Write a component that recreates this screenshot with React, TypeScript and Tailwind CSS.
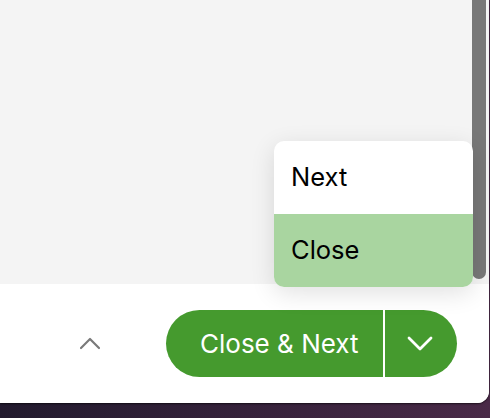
function Chevron({ up, className }: { up?: boolean; className?: string }) {
  return (
    <svg width="26" height="15" viewBox="0 0 26 15" fill="none" className={className}>
      <path
        d={up ? 'M4 12 L13 3 L22 12' : 'M2 2 L13 13 L24 2'}
        stroke="currentColor"
        strokeWidth={up ? 2.2 : 2.8}
        strokeLinecap="round"
        strokeLinejoin="round"
      />
    </svg>
  )
}

export default function App() {
  return (
    <div
      className="relative w-[490px] h-[418px] overflow-hidden bg-gradient-to-r from-[#221a2e] to-[#4a2a48]"
      style={{ fontFamily: 'Inter, "Noto Sans", sans-serif' }}
    >
      {/* Fenêtre */}
      <div className="w-[489px] h-[403px] flex flex-col rounded-br-xl overflow-hidden bg-white shadow-[0_1px_2px_rgba(0,0,0,0.6)]">
        {/* Zone de contenu */}
        <div className="h-[284px] bg-[#f4f4f4] flex justify-end pr-[3px]">
          <div className="w-[14px] h-[279px] bg-[#787878] rounded-b-full" />
        </div>

        {/* Pied */}
        <div className="flex-1 bg-white flex items-start pt-[26px]">
          <div className="w-[166px] h-[67px] flex items-center justify-center pl-[14px]">
            <Chevron up className="text-[#7a7a7a]" />
          </div>
          <div className="flex h-[67px] w-[291px] rounded-full bg-[#459a2e] overflow-hidden">
            <button className="w-[217px] h-full text-left pl-[34px] text-[26px] text-white">
              Close &amp; Next
            </button>
            <div className="w-[1.5px] h-full bg-white" />
            <button className="flex-1 h-full flex items-center justify-center pr-[2px]">
              <Chevron className="text-white" />
            </button>
          </div>
        </div>
      </div>

      {/* Menu déroulant */}
      <div className="absolute left-[274px] top-[141px] w-[199px] rounded-[10px] overflow-hidden bg-white shadow-[0_6px_24px_rgba(0,0,0,0.12)]">
        <div className="h-[73px] flex items-center pl-[17px] text-[25.5px] text-black">Next</div>
        <div className="h-[73px] flex items-center pl-[17px] text-[25.5px] text-black bg-[#a9d5a0]">Close</div>
      </div>
    </div>
  )
}
